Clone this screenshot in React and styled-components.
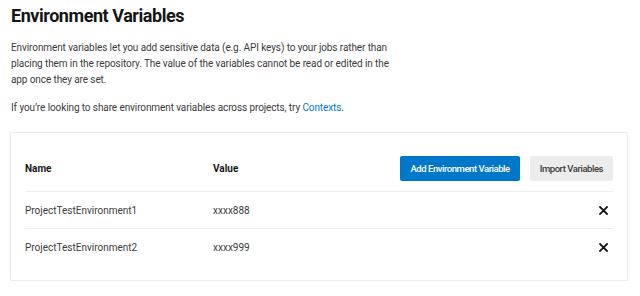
import React from "react";
import styled, { createGlobalStyle } from "styled-components";

const Global = createGlobalStyle`
  html, body { margin: 0; padding: 0; background: #ffffff; }
  body { font-family: Roboto, "Liberation Sans", Arial, sans-serif; color: #3b3b3b; }
  * { box-sizing: border-box; }
`;

const Page = styled.div`
  width: 640px;
  padding: 4px 12px 0 10px;
`;

const Title = styled.h1`
  margin: 0 0 12px 1px;
  font-size: 18px;
  line-height: 24px;
  font-weight: 700;
  color: #161616;
  letter-spacing: -0.45px;
`;

const Para = styled.p`
  margin: 0 0 12px 1px;
  font-size: 10px;
  line-height: 16px;
  letter-spacing: -0.1px;
  width: 390px;
  color: #3b3b3b;
`;

const Link = styled.a`
  color: #0078ca;
  text-decoration: none;
`;

const Card = styled.div`
  margin-top: 16px;
  width: 618px;
  background: #fff;
  border: 1px solid #ececec;
  border-radius: 2px;
  box-shadow: 0 1px 3px rgba(0, 0, 0, 0.06);
  padding: 23px 14px 14px 14px;
`;

const Row = styled.div`
  display: grid;
  grid-template-columns: 188px 1fr auto;
  align-items: center;
  height: ${(p) => (p.$header ? "36px" : "37px")};
  padding-bottom: ${(p) => (p.$header ? "10px" : "0")};
  border-bottom: ${(p) => (p.$last ? "none" : "1px solid #ececec")};
  font-size: 10px;
  font-weight: ${(p) => (p.$header ? 700 : 400)};
  color: ${(p) => (p.$header ? "#161616" : "#3b3b3b")};
`;

const Actions = styled.div`
  display: flex;
  gap: 10px;
`;

const Button = styled.button`
  height: 25px;
  border: none;
  border-radius: 2px;
  padding: 0 10px;
  font-family: Roboto, "Liberation Sans", Arial, sans-serif;
  font-size: 9.5px;
  font-weight: 500;
  letter-spacing: -0.45px;
  background: ${(p) => (p.$primary ? "#0078ca" : "#ececec")};
  color: ${(p) => (p.$primary ? "#ffffff" : "#3b3b3b")};
  cursor: pointer;
`;

const Remove = styled.button`
  border: none;
  background: none;
  padding: 0 5px 0 0;
  display: flex;
  align-items: center;
  cursor: pointer;
`;

const XIcon = () => (
  <svg width="9" height="9" viewBox="0 0 9 9">
    <path d="M1 1L8 8M8 1L1 8" stroke="#161616" strokeWidth="1.8" strokeLinecap="square" />
  </svg>
);

const vars = [
  { name: "ProjectTestEnvironment1", value: "xxxx888" },
  { name: "ProjectTestEnvironment2", value: "xxxx999" },
];

export default function App() {
  return (
    <Page>
      <Global />
      <Title>Environment Variables</Title>
      <Para>
        Environment variables let you add sensitive data (e.g. API keys) to your jobs rather than
        placing them in the repository. The value of the variables cannot be read or edited in the
        app once they are set.
      </Para>
      <Para>
        If you’re looking to share environment variables across projects, try <Link href="#">Contexts</Link>.
      </Para>
      <Card>
        <Row $header>
          <span>Name</span>
          <span>Value</span>
          <Actions>
            <Button $primary>Add Environment Variable</Button>
            <Button>Import Variables</Button>
          </Actions>
        </Row>
        {vars.map((v, i) => (
          <Row key={v.name} $last={i === vars.length - 1}>
            <span>{v.name}</span>
            <span>{v.value}</span>
            <Remove aria-label="Remove">
              <XIcon />
            </Remove>
          </Row>
        ))}
      </Card>
    </Page>
  );
}
